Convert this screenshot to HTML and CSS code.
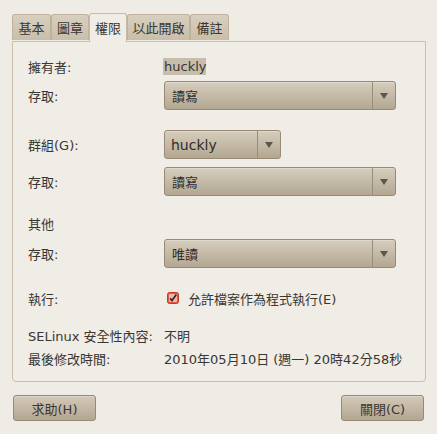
FILE: index.html
```html
<!DOCTYPE html>
<html>
  <head>
    <meta charset="utf-8">
    <title>權限</title>
    <link rel="stylesheet" href="styles.css">
  </head>
  <body>
    <div class="dialog">
      <!-- notebook tabs -->
      <div class="tabs">
        <div class="tab" style="width:39px">基本</div>
        <div class="tab" style="width:38px">圖章</div>
        <div class="tab active" style="width:38px">權限</div>
        <div class="tab" style="width:63px">以此開啟</div>
        <div class="tab" style="width:39px">備註</div>
      </div>

      <div class="panel">
        <div class="row owner">
          <span class="label">擁有者:</span>
          <span class="selected">huckly</span>
        </div>
        <div class="row combo-row r2">
          <span class="label">存取:</span>
          <div class="combo wide"><span class="value">讀寫</span><span class="arrow"></span></div>
        </div>

        <div class="row combo-row r3">
          <span class="label">群組(G):</span>
          <div class="combo narrow"><span class="value latin">huckly</span><span class="arrow"></span></div>
        </div>
        <div class="row combo-row r4">
          <span class="label">存取:</span>
          <div class="combo wide"><span class="value">讀寫</span><span class="arrow"></span></div>
        </div>

        <div class="row r5">
          <span class="label">其他</span>
        </div>
        <div class="row combo-row r6">
          <span class="label">存取:</span>
          <div class="combo wide"><span class="value">唯讀</span><span class="arrow"></span></div>
        </div>

        <div class="row r7">
          <span class="label">執行:</span>
          <label class="check">
            <svg width="12" height="12" viewBox="0 0 12 12">
              <rect x="0.5" y="0.5" width="11" height="11" rx="2" fill="#e9573f" stroke="#c0392b"/>
              <rect x="2" y="2" width="8" height="8" rx="1" fill="#f7b3a4"/>
              <path d="M3 6.2 L5 8.6 L9.3 2.6" fill="none" stroke="#2d2d2d" stroke-width="1.7"/>
            </svg>
            允許檔案作為程式執行(E)
          </label>
        </div>

        <div class="row r8">
          <span class="label">SELinux 安全性內容:</span>
          <span>不明</span>
        </div>
        <div class="row r9">
          <span class="label">最後修改時間:</span>
          <span>2010年05月10日 (週一) 20時42分58秒</span>
        </div>
      </div>

      <div class="footer">
        <button class="btn">求助(H)</button>
        <button class="btn">關閉(C)</button>
      </div>
    </div>
  </body>
</html>
```
FILE: styles.css
```css
*{
  margin:0;
  padding:0;
  box-sizing:border-box;
}

body{
  background-color:#efebe5;
  color:#3a3632;
  font-family:"DejaVu Sans","Noto Sans CJK TC",sans-serif;
  font-size:13px;
  width:437px;
  height:434px;
  overflow:hidden;
}

.dialog{
  padding:12px 12px 0 12px;
}

/* ---------- tabs ---------- */
.tabs{
  display:flex;
  align-items:flex-end;
  height:29px;
  position:relative;
  z-index:1;
}

.tab{
  height:26px;
  margin-bottom:1px;
  display:flex;
  align-items:center;
  justify-content:center;
  background:linear-gradient(#d8cfbf,#c9bea9);
  border:1px solid #bfb29b;
  border-bottom:none;
  border-radius:3px 3px 0 0;
  color:#3a3632;
}

.tab.active{
  height:29px;
  margin-bottom:-1px;
  background:#f0ece6;
  border-color:#c8bca6;
  padding-bottom:2px;
}

/* ---------- panel ---------- */
.panel{
  width:414px;
  height:341px;
  border:1px solid #cbbfa8;
  border-radius:0 0 4px 4px;
  background:#f0ece6;
  padding:14px 0 0 15px;
}

.row{
  display:flex;
  align-items:center;
  height:20px;
}

.label{
  width:136px;
  flex-shrink:0;
}

.selected{
  background:#c8bdab;
  padding:0 0 0 1px;
  margin-left:-1px;
  line-height:17px;
}

.combo-row{
  height:29px;
}

.r2{ margin-top:5px; }
.r3{ margin-top:20px; }
.r4{ margin-top:8px; }
.r5{ margin-top:17px; }
.r6{ margin-top:6px; }
.r7{ margin-top:20px; }
.r8{ margin-top:17px; }
.r9{ margin-top:3px; }

.combo{
  height:29px;
  display:flex;
  align-items:stretch;
  border:1px solid #988a74;
  border-radius:3px;
  background:linear-gradient(#d6cdbd,#b3a791);
  box-shadow:inset 0 1px 0 rgba(255,255,255,0.25);
}

.combo.wide{ width:232px; }
.combo.narrow{ width:117px; }

.value{
  flex:1;
  display:flex;
  align-items:center;
  padding-left:7px;
  color:#2f2c28;
}

.value.latin{
  font-size:14px;
  padding-left:6px;
}

.arrow{
  width:23px;
  border-left:1px solid #9a8d78;
  display:flex;
  align-items:center;
  justify-content:center;
}

.arrow::after{
  content:"";
  border-left:4px solid transparent;
  border-right:4px solid transparent;
  border-top:6px solid #5b5650;
}

.check{
  display:flex;
  align-items:center;
  gap:9px;
  margin-left:3px;
}

.check svg{
  flex-shrink:0;
}

/* ---------- buttons ---------- */
.footer{
  display:flex;
  justify-content:space-between;
  margin-top:13px;
  padding:0 1px;
}

.btn{
  width:83px;
  height:26px;
  font-family:inherit;
  font-size:13px;
  color:#3a3632;
  border:1px solid #988a74;
  border-radius:3px;
  background:linear-gradient(#d3c9b8,#b3a791);
  box-shadow:inset 0 1px 0 rgba(255,255,255,0.25);
}
```
